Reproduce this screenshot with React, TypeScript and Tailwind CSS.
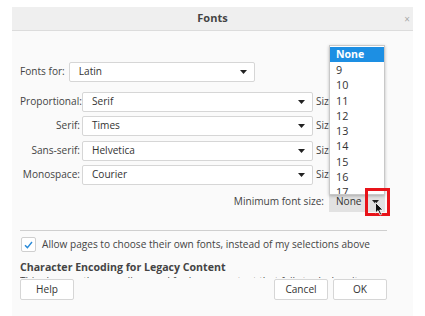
import React from "react";

const font = { fontFamily: '"Open Sans", "Liberation Sans", sans-serif' };

function Arrow() {
  return (
    <svg width="7" height="4" viewBox="0 0 7 4" className="shrink-0">
      <path d="M0 0 L7 0 L3.5 4 Z" fill="#222" />
    </svg>
  );
}

function Select({ value, w }: { value: string; w: string }) {
  return (
    <div
      className={`h-[20px] ${w} bg-white border border-[#d6d6d6] rounded-[2px] flex items-center justify-between pl-[9px] pr-[7px] text-[#333]`}
    >
      <span>{value}</span>
      <Arrow />
    </div>
  );
}

function Row({ label, value, mt }: { label: string; value: string; mt: string }) {
  return (
    <div className={`flex items-center ${mt}`}>
      <div className="w-[62px] text-right text-[#444] pr-[2px]">{label}</div>
      <Select value={value} w="w-[231px]" />
      <span className="ml-[3px] text-[#444]">Size:</span>
    </div>
  );
}

export default function App() {
  const items = ["9", "10", "11", "12", "13", "14", "15", "16", "17"];
  return (
    <div className="w-[425px] h-[316px] bg-white relative overflow-hidden text-[10.1px]" style={font}>
      <div className="absolute left-[12px] top-[7px] w-[401px] h-[309px] bg-[#fafafa] flex flex-col">
        <div className="h-[24px] bg-[#efefef] border-b border-[#dcdcdc] flex items-center justify-center relative shrink-0">
          <span className="font-bold text-[#444] text-[11px]">Fonts</span>
          <span className="absolute right-[3px] top-[5px] text-[#aaa] text-[10px]">×</span>
        </div>
        <div className="pl-[8px] pr-[26px] flex flex-col relative">
          <div className="flex items-center mt-[31px]">
            <span className="text-[#444] mr-[4px]">Fonts for:</span>
            <Select value="Latin" w="w-[186px]" />
          </div>
          <Row label="Proportional:" value="Serif" mt="mt-[10px]" />
          <Row label="Serif:" value="Times" mt="mt-[4px]" />
          <Row label="Sans-serif:" value="Helvetica" mt="mt-[5px]" />
          <Row label="Monospace:" value="Courier" mt="mt-[4px]" />
          <div className="flex items-center justify-end mt-[7px] h-[20px]">
            <span className="text-[#444] mr-[5px]">Minimum font size:</span>
            <div className="w-[56px] h-[20px] bg-[#e2e2e2] flex items-center justify-between pl-[7px] pr-[6px] text-[#333] mr-[2px]">
              <span>None</span>
              <Arrow />
            </div>
          </div>
          <div className="h-px bg-[#cfcfcf] mt-[18px]" />
          <div className="flex items-center mt-[6px]">
            <div className="w-[15px] h-[15px] bg-white border border-[#cfcfcf] rounded-[2px] flex items-center justify-center ml-[1px]">
              <svg width="9" height="8" viewBox="0 0 9 8">
                <path d="M1 4.2 L3.4 6.6 L8 1" stroke="#2a8ad8" strokeWidth="1.4" fill="none" />
              </svg>
            </div>
            <span className="ml-[6px] text-[#444]">Allow pages to choose their own fonts, instead of my selections above</span>
          </div>
          <div className="mt-[8px] font-bold text-[#444] text-[10.6px] leading-[14px]">Character Encoding for Legacy Content</div>
          <div className="h-[3px] overflow-hidden mt-[1px] text-[#444] leading-[12px] whitespace-nowrap">
            <span className="block">This changes the encoding used for legacy content that fails to declare its</span>
          </div>
          <div className="flex items-center mt-[1px]">
            <div className="w-[54px] h-[21px] bg-white border border-[#d6d6d6] rounded-[2px] flex items-center justify-center text-[#333]">Help</div>
            <div className="flex-1" />
            <div className="w-[54px] h-[21px] bg-white border border-[#d6d6d6] rounded-[2px] flex items-center justify-center text-[#333]">Cancel</div>
            <div className="w-[54px] h-[21px] bg-white border border-[#d6d6d6] rounded-[2px] flex items-center justify-center text-[#333] ml-[5px]">OK</div>
          </div>
        </div>
      </div>

      {/* dropdown list overlay */}
      <div className="absolute left-[329px] top-[45px] w-[56px] h-[150px] bg-white border border-[#c8c8c8] shadow-[0_1px_3px_rgba(0,0,0,0.25)] overflow-hidden">
        <div className="h-[15px] mt-[1px] bg-[#1d8fe3] text-white font-bold pl-[6px] leading-[15px] text-[10.5px]">None</div>
        {items.map((it) => (
          <div key={it} className="h-[15.3px] pl-[6px] leading-[15.3px] text-[#333] text-[10.8px]">{it}</div>
        ))}
      </div>

      {/* red highlight */}
      <div className="absolute left-[365px] top-[188px] w-[25px] h-[28px] border-[3px] border-[#e8141a]" />
      {/* cursor */}
      <svg className="absolute left-[375px] top-[202px]" width="9" height="14" viewBox="0 0 9 14">
        <path d="M0.5 0.5 L0.5 11 L3 8.6 L5 13 L6.6 12.3 L4.7 8 L8 8 Z" fill="#111" stroke="#fff" strokeWidth="0.8" />
      </svg>
    </div>
  );
}
